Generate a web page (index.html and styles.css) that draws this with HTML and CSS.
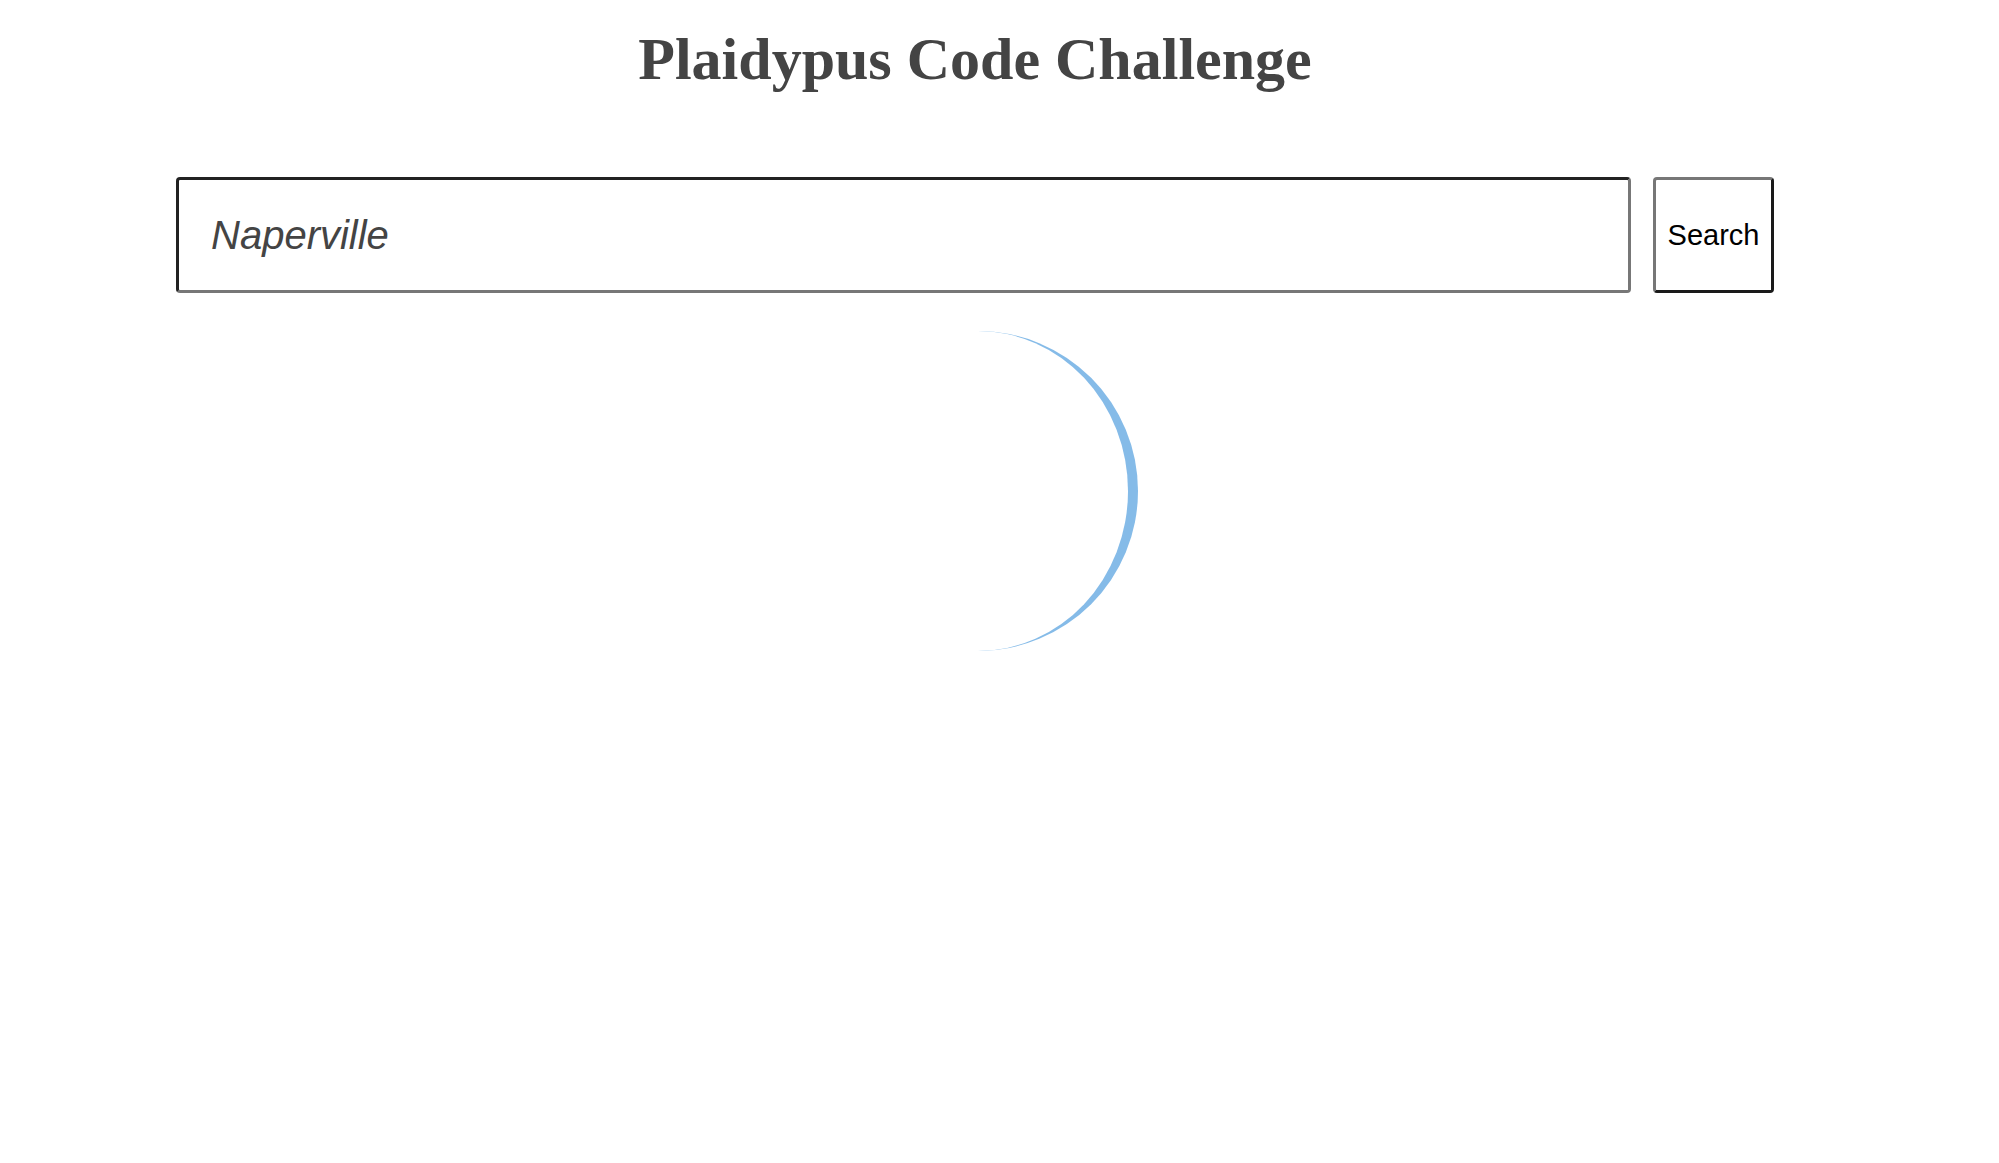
FILE: index.html
```html
<!DOCTYPE html>
<html lang="en">
<head>
<meta charset="utf-8">
<title>Plaidypus Code Challenge</title>
<link rel="stylesheet" href="styles.css">
</head>
<body>
<div class="page">
  <h1 class="title">Plaidypus Code Challenge</h1>
  <form class="search-row">
    <input class="search-input" type="text" value="Naperville">
    <button class="search-button" type="button">Search</button>
  </form>
  <div class="spinner-wrap">
    <div class="spinner"></div>
  </div>
</div>
</body>
</html>
```
FILE: styles.css
```css
html, body {
  margin: 0;
  padding: 0;
  background: #ffffff;
}

.page {
  width: 1950px;
  display: flex;
  flex-direction: column;
  align-items: center;
}

.title {
  margin: 26px 0 0;
  font-family: "Liberation Serif", "Times New Roman", serif;
  font-weight: bold;
  font-size: 60px;
  line-height: 66px;
  color: #444444;
  text-align: center;
}

.search-row {
  margin: 85px 0 0;
  display: flex;
  gap: 22px;
  width: 1598px;
}

.search-input {
  box-sizing: border-box;
  width: 1455px;
  height: 116px;
  margin: 0;
  padding: 0 0 0 32px;
  border-width: 3px;
  border-style: solid;
  border-color: #222222 #777777 #777777 #222222;
  border-radius: 4px;
  font-family: "Liberation Sans", Arial, sans-serif;
  font-style: italic;
  font-size: 40px;
  color: #444444;
  background: #ffffff;
  outline: none;
}

.search-button {
  box-sizing: border-box;
  width: 121px;
  height: 116px;
  margin: 0;
  padding: 0;
  border-width: 3px;
  border-style: solid;
  border-color: #777777 #1a1a1a #1a1a1a #777777;
  border-radius: 4px;
  background: #ffffff;
  font-family: "Liberation Sans", Arial, sans-serif;
  font-size: 29px;
  color: #000000;
}

.spinner-wrap {
  margin-top: 38px;
  display: flex;
  justify-content: center;
  padding-left: 5px;
}

.spinner {
  box-sizing: border-box;
  width: 320px;
  height: 320px;
  border-radius: 50%;
  border-right: 10px solid #85bbe8;
  filter: blur(0.5px);
}
```
